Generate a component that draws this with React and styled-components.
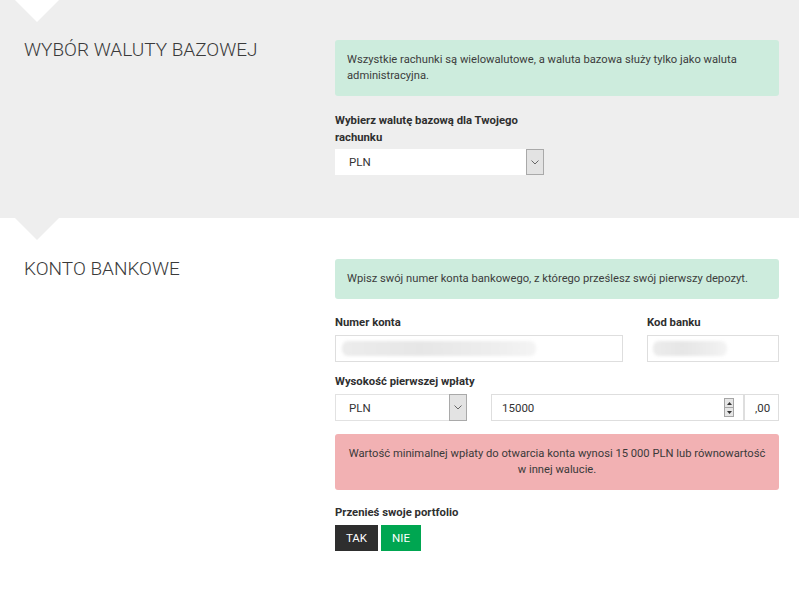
import React from "react";
import styled, { createGlobalStyle } from "styled-components";

const Global = createGlobalStyle`
  html, body { margin: 0; padding: 0; background: #ffffff; }
  body { font-family: Roboto, "Liberation Sans", Arial, sans-serif; color: #333; }
  * { box-sizing: border-box; }
`;

const Page = styled.div`
  width: 799px;
  min-height: 596px;
  background: #ffffff;
`;

const Section = styled.section`
  position: relative;
  display: grid;
  grid-template-columns: 335px 444px;
  padding: ${(p) => p.$pad};
  background: ${(p) => p.$bg};
  &::before {
    content: "";
    position: absolute;
    top: 0;
    left: 15px;
    width: 0;
    height: 0;
    border-left: 22.5px solid transparent;
    border-right: 22.5px solid transparent;
    border-top: 22px solid ${(p) => p.$notch};
  }
`;

const Title = styled.h2`
  margin: 0;
  padding-left: 24px;
  font-size: 19px;
  line-height: 20px;
  font-weight: 300;
  color: #3a3a3a;
  text-transform: uppercase;
`;

const Column = styled.div`
  display: flex;
  flex-direction: column;
`;

const Alert = styled.div`
  padding: 12px 12px;
  border-radius: 3px;
  font-size: 11.2px;
  line-height: 16px;
  color: ${(p) => (p.$tone === "danger" ? "#3a3a3a" : "#3c3c3c")};
  background: ${(p) => (p.$tone === "danger" ? "#f2b1b3" : "#cdecdd")};
  text-align: ${(p) => (p.$tone === "danger" ? "center" : "left")};
  margin-bottom: ${(p) => p.$mb || 0}px;
`;

const Field = styled.div`
  display: flex;
  flex-direction: column;
  margin-bottom: ${(p) => p.$mb || 0}px;
`;

const Label = styled.label`
  display: block;
  font-size: 11.3px;
  line-height: 17px;
  font-weight: 700;
  color: #2f2f2f;
  margin-bottom: ${(p) => p.$mb || 4}px;
  max-width: ${(p) => p.$max || "none"};
`;

const Row = styled.div`
  display: grid;
  grid-template-columns: ${(p) => p.$cols};
  column-gap: ${(p) => p.$gap}px;
`;

const SelectBox = styled.div`
  display: flex;
  align-items: stretch;
  width: ${(p) => p.$w}px;
  height: ${(p) => p.$h}px;
  background: #fff;
  border: 1px solid ${(p) => (p.$bordered ? "#e2e2e2" : "#ffffff")};
  border-right: none;
  font-size: 11.5px;
  color: #333;
`;

const SelectValue = styled.span`
  flex: 1;
  display: flex;
  align-items: center;
  padding-left: 13px;
`;

const ArrowBtn = styled.span`
  width: 18px;
  display: flex;
  align-items: center;
  justify-content: center;
  background: #e3e3e3;
  border: 1px solid #a9a9a9;
  margin: -1px 0;
`;

const InputBox = styled.div`
  display: flex;
  align-items: center;
  height: 27px;
  background: #fff;
  border: 1px solid #dedede;
  border-left-color: ${(p) => (p.$joined ? "transparent" : "#dedede")};
  padding: 0 ${(p) => p.$pr || 0}px 0 ${(p) => p.$pl || 10}px;
  font-size: 11.5px;
  color: #333;
`;

const Redacted = styled.span`
  display: block;
  width: ${(p) => p.$w}px;
  height: 15px;
  border-radius: 6px;
  background: linear-gradient(90deg, #ececec, #e6e6e6 40%, #eeeeee 80%, #f4f4f4);
  filter: blur(1.5px);
`;

const Value = styled.span`
  flex: 1;
`;

const AmountGroup = styled.div`
  display: grid;
  grid-template-columns: 1fr 35px;
`;

const Spinner = styled.span`
  display: flex;
  flex-direction: column;
  width: 10px;
  height: 19px;
  border: 1px solid #a5a5a5;
  background: #e6e6e6;
`;

const SpinHalf = styled.span`
  flex: 1;
  display: flex;
  align-items: center;
  justify-content: center;
  border-top: ${(p) => (p.$down ? "1px solid #a5a5a5" : "none")};
`;

const Buttons = styled.div`
  display: flex;
  gap: 3px;
`;

const Toggle = styled.button`
  width: ${(p) => p.$w}px;
  height: 26px;
  padding: 0;
  border: none;
  border-radius: 0;
  font-family: Roboto, "Liberation Sans", Arial, sans-serif;
  font-size: 11.5px;
  color: #ffffff;
  background: ${(p) => (p.$active ? "#00a651" : "#2e2e2e")};
  cursor: pointer;
`;

const Chevron = () => (
  <svg width="8" height="5" viewBox="0 0 8 5">
    <polyline points="0.5,0.5 4,4 7.5,0.5" fill="none" stroke="#666" strokeWidth="1" />
  </svg>
);

const Tri = ({ up }) => (
  <svg width="5" height="3" viewBox="0 0 5 3">
    <polygon points={up ? "0,3 5,3 2.5,0" : "0,0 5,0 2.5,3"} fill="#333" />
  </svg>
);

export default function App() {
  return (
    <>
      <Global />
      <Page>
        <Section $bg="#eeeeee" $notch="#ffffff" $pad="40px 20px 43px 0">
          <Title>Wybór waluty bazowej</Title>
          <Column>
            <Alert $mb={16}>
              Wszystkie rachunki są wielowalutowe, a waluta bazowa służy tylko jako waluta
              administracyjna.
            </Alert>
            <Field>
              <Label $mb={3} $max="208px">
                Wybierz walutę bazową dla Twojego rachunku
              </Label>
              <SelectBox $w={209} $h={26}>
                <SelectValue>PLN</SelectValue>
                <ArrowBtn>
                  <Chevron />
                </ArrowBtn>
              </SelectBox>
            </Field>
          </Column>
        </Section>

        <Section $bg="#ffffff" $notch="#eeeeee" $pad="41px 20px 40px 0">
          <Title>Konto bankowe</Title>
          <Column>
            <Alert $mb={15}>
              Wpisz swój numer konta bankowego, z którego prześlesz swój pierwszy depozyt.
            </Alert>
            <Row $cols="288px 132px" $gap={24}>
              <Field $mb={11}>
                <Label>Numer konta</Label>
                <InputBox $pl={6}>
                  <Redacted $w={194} />
                </InputBox>
              </Field>
              <Field $mb={11}>
                <Label>Kod banku</Label>
                <InputBox $pl={5}>
                  <Redacted $w={74} />
                </InputBox>
              </Field>
            </Row>
            <Field $mb={13}>
              <Label>Wysokość pierwszej wpłaty</Label>
              <Row $cols="132px 288px" $gap={24}>
                <SelectBox $w={132} $h={27} $bordered>
                  <SelectValue>PLN</SelectValue>
                  <ArrowBtn>
                    <Chevron />
                  </ArrowBtn>
                </SelectBox>
                <AmountGroup>
                  <InputBox $pl={10} $pr={9}>
                    <Value>15000</Value>
                    <Spinner>
                      <SpinHalf>
                        <Tri up />
                      </SpinHalf>
                      <SpinHalf $down>
                        <Tri />
                      </SpinHalf>
                    </Spinner>
                  </InputBox>
                  <InputBox $pl={10}>,00</InputBox>
                </AmountGroup>
              </Row>
            </Field>
            <Alert $tone="danger" $mb={14}>
              Wartość minimalnej wpłaty do otwarcia konta wynosi 15 000 PLN lub równowartość
              <br />w innej walucie.
            </Alert>
            <Field>
              <Label>Przenieś swoje portfolio</Label>
              <Buttons>
                <Toggle $w={43}>TAK</Toggle>
                <Toggle $w={40} $active>
                  NIE
                </Toggle>
              </Buttons>
            </Field>
          </Column>
        </Section>
      </Page>
    </>
  );
}
